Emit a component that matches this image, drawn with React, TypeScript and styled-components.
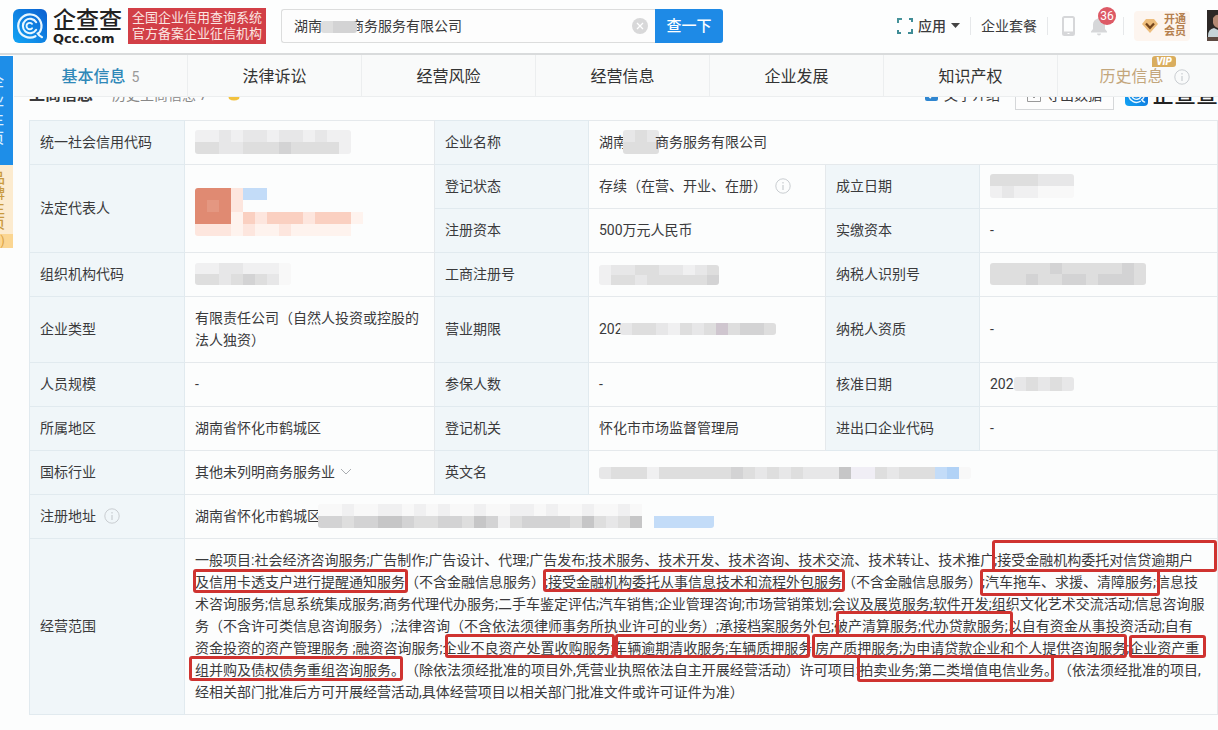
import React from 'react';
import styled, { createGlobalStyle } from 'styled-components';

const GlobalStyle = createGlobalStyle`
  * { box-sizing: border-box; }
  body {
    margin: 0;
    background: #fcfdfd;
    color: #3a3a3c;
    font: 14px/22px Roboto, "Noto Sans CJK SC", sans-serif;
    text-spacing-trim: space-all;
    overflow-x: hidden;
  }
  a { color: inherit; text-decoration: none; }
  button, input { font: inherit; color: inherit; }
`;

/* ---------- header ---------- */

const Header = styled.header`
  display: flex;
  align-items: center;
  height: 55px;
  padding: 0 0 2px 13px;
  background: #fdfefe;
  border-bottom: 2px solid #d9dbdc;
  overflow: hidden;
`;
const Brand = styled.a`
  display: flex;
  align-items: center;
  gap: 6px;
`;
const BrandText = styled.span`
  display: flex;
  flex-direction: column;
  width: 70px;
  padding-top: 3px;
  color: #222;
`;
const BrandName = styled.span<{ $size: number }>`
  font-size: ${p => p.$size}px;
  line-height: 24px;
  font-weight: 500;
  white-space: nowrap;
  color: #222;
`;
const BrandDomain = styled.span`
  font: bold 13px/12px "DejaVu Sans", sans-serif;
`;
const Slogan = styled.div`
  margin-left: 5px;
  padding: 2px 4px;
  background: #d23f47;
  color: #fbe6e2;
  font-size: 13px;
  line-height: 16px;
  white-space: nowrap;
`;
const Search = styled.form`
  position: relative;
  display: flex;
  flex: 0 0 442px;
  height: 34px;
  margin-left: 15px;
`;
const SearchInput = styled.input`
  flex: 1;
  min-width: 0;
  padding: 0 34px 0 12px;
  border: 1px solid #dcdddd;
  border-right: 0;
  border-radius: 3px 0 0 3px;
  background: #fdfdfd;
  font-size: 14px;
  outline: none;
`;
const SearchMask = styled.span`
  position: absolute;
  left: 40px;
  top: 12px;
  display: flex;
`;
const ClearButton = styled.button`
  position: absolute;
  right: 75px;
  top: 9px;
  display: flex;
  padding: 0;
  border: 0;
  background: none;
`;
const SearchButton = styled.button`
  width: 68px;
  padding: 0;
  border: 0;
  border-radius: 0 3px 3px 0;
  background: #1e8ae6;
  color: #fff;
  font-size: 15px;
  font-weight: 500;
`;
const Tools = styled.nav`
  display: flex;
  align-items: center;
  margin-left: auto;
  white-space: nowrap;
`;
const ToolLink = styled.a<{ $strong?: boolean }>`
  display: flex;
  align-items: center;
  gap: 5px;
  font-weight: ${p => (p.$strong ? 500 : 400)};
`;
const Divider = styled.span`
  width: 1px;
  height: 18px;
  margin: 0 10px;
  background: #e6e8ea;
`;
const IconGroup = styled.span`
  display: flex;
  gap: 15px;
  margin: 0 5px 0 4px;
`;
const IconButton = styled.button`
  position: relative;
  display: flex;
  padding: 0;
  border: 0;
  background: none;
`;
const Badge = styled.span`
  position: absolute;
  left: 8px;
  top: -9px;
  width: 18px;
  height: 18px;
  border-radius: 9px;
  background: #dd5a66;
  color: #fff;
  font-size: 12px;
  line-height: 18px;
  text-align: center;
`;
const Membership = styled.a`
  display: flex;
  align-items: center;
  gap: 6px;
  height: 30px;
  padding: 0 4px 0 8px;
  border-radius: 4px;
  background: #fdf5ef;
  color: #b5804e;
  font-size: 11px;
  line-height: 12px;
  font-weight: 700;
`;
const Avatar = styled.svg`
  display: block;
  margin-left: 17px;
`;

/* ---------- frame ---------- */

const Frame = styled.div`
  display: flex;
  align-items: flex-start;
`;
const Side = styled.aside`
  flex: 0 0 14px;
  padding: 1px 1px 0 0;
  overflow: hidden;
`;
const SideLink = styled.a<{ $gold?: boolean }>`
  display: flex;
  flex-direction: column;
  align-items: flex-end;
  height: ${p => (p.$gold ? 69 : 109)}px;
  padding: ${p => (p.$gold ? '6px 8px 0 0' : '16px 9px 0 0')};
  background: ${p => (p.$gold ? '#fcebcf' : '#1e8ee8')};
  color: ${p => (p.$gold ? '#c99a3f' : '#d9efff')};
  font-size: 14px;
  line-height: ${p => (p.$gold ? 15 : 19)}px;
  font-weight: 500;
`;
const SideToggle = styled.button`
  display: block;
  width: 13px;
  height: 14px;
  padding: 0 8px 0 0;
  border: 0;
  background: #fbd692;
  color: #d8a040;
  font-size: 12px;
  line-height: 14px;
`;
const Main = styled.main`
  flex: 1;
  min-width: 0;
`;
const Tabs = styled.nav`
  display: grid;
  grid-template-columns: repeat(7, 1fr);
  height: 42px;
  margin-right: -14px;
  background: #f9fafa;
  border-bottom: 1px solid #eceeef;
`;
const Tab = styled.a<{ $tone?: 'active' | 'gold' }>`
  position: relative;
  display: flex;
  align-items: center;
  justify-content: center;
  gap: 6px;
  padding-top: 2px;
  border-right: 1px solid #eceeef;
  font-size: 16px;
  font-weight: ${p => (p.$tone === 'active' ? 500 : 400)};
  color: ${p => (p.$tone === 'active' ? '#2f88b8' : p.$tone === 'gold' ? '#c3a67c' : '#333')};
`;
const TabCount = styled.span`
  font-size: 14px;
  font-weight: 400;
  color: #999;
`;
const HistoryText = styled.span`
  margin-right: 26px;
`;
const TabInfo = styled.span`
  position: absolute;
  left: 116px;
  top: 14px;
  display: flex;
`;
const VipTag = styled.span`
  position: absolute;
  left: 94px;
  top: 1px;
  width: 24px;
  border-radius: 3px 3px 3px 0;
  background: #d9ad5e;
  color: #fff;
  font-size: 10px;
  line-height: 11px;
  font-weight: 900;
  font-style: italic;
  text-align: center;
`;

/* ---------- section heading, partly scrolled under the tabs ---------- */

const HeadingClip = styled.div`
  display: flex;
  align-items: flex-end;
  height: 23px;
  padding: 0 0 10px 15px;
  overflow: hidden;
`;
const Heading = styled.div`
  display: flex;
  align-items: center;
  flex: 1;
  height: 31px;
  white-space: nowrap;
`;
const Title = styled.h2`
  margin: 0;
  font-size: 16px;
  font-weight: 700;
`;
const HistoryLink = styled.a`
  margin: 0 20px 0 19px;
  color: #888;
`;
const CheckLabel = styled.label`
  display: flex;
  align-items: center;
  gap: 6px;
  margin-left: auto;
`;
const Check = styled.input`
  width: 13px;
  height: 13px;
  margin: 0;
  accent-color: #2f86d0;
`;
const ExportButton = styled.button`
  display: flex;
  align-items: center;
  gap: 5px;
  height: 31px;
  margin: 0 11px 0 15px;
  padding: 0 11px;
  border: 1px solid #d5d7d9;
  background: #fdfdfd;
`;
const Watermark = styled.span`
  display: flex;
  align-items: center;
  gap: 4px;
`;

/* ---------- company table ---------- */

const TableWrap = styled.section`
  padding: 0 0 16px 15px;
`;
const Table = styled.table`
  width: 100%;
  table-layout: fixed;
  border-collapse: collapse;
`;
const Label = styled.th`
  height: 44px;
  padding: 0 10px 2px;
  border: 1px solid #e1eaef;
  background: #f0f6f9;
  font-weight: 400;
  text-align: left;
`;
const Cell = styled.td<{ $tall?: boolean; $low?: boolean }>`
  height: ${p => (p.$tall ? 66 : 44)}px;
  padding: ${p => (p.$low ? '6px 10px 0' : '0 10px 2px')};
  border: 1px solid #e5e9ec;
`;
const Line = styled.div`
  display: flex;
  align-items: center;
  white-space: nowrap;
`;
const After = styled.span`
  display: flex;
  margin-left: 8px;
`;
const Scope = styled.td`
  position: relative;
  height: 176px;
  padding: 9px 10px 11px;
  border: 1px solid #e5e9ec;
`;
const ScopeLine = styled.span`
  display: block;
  white-space: pre;
`;
const MarkBox = styled.span<{ $x: number; $y: number; $w: number; $h: number }>`
  position: absolute;
  left: ${p => p.$x}px;
  top: ${p => p.$y}px;
  width: ${p => p.$w}px;
  height: ${p => p.$h}px;
  border: 3px solid #cf3330;
  border-radius: 3px;
  pointer-events: none;
`;

/* ---------- redaction mosaic ---------- */

const tones: Record<string, string> = {
  a: '#f8f8f8', b: '#f0f0f1', c: '#e7e7e8', d: '#dedede', e: '#d3d3d4', f: '#c6c6c7',
  l: '#f0eef5', m: '#cfc6cf', B: '#c3dcf8', D: '#b1d2f6',
  R: '#e08a72', S: '#e49781', O: '#fad0c1', P: '#fde6de', Q: '#fef3ee',
};
const MosaicGrid = styled.span<{ $over?: number }>`
  display: inline-flex;
  flex-direction: column;
  flex: none;
  vertical-align: middle;
  margin: 0 -${p => p.$over ?? 0}px;
  border-radius: 3px;
  overflow: hidden;
`;
const MosaicRow = styled.span`
  display: flex;
`;
const Tile = styled.span<{ $c: string; $h: number }>`
  width: 12px;
  height: ${p => p.$h}px;
  background: ${p => tones[p.$c] ?? 'transparent'};
`;
function Mosaic({ rows, over, tile = 12 }: { rows: string[]; over?: number; tile?: number }) {
  return (
    <MosaicGrid $over={over} aria-hidden="true">
      {rows.map((r, i) => (
        <MosaicRow key={i}>
          {r.split('').map((c, j) => <Tile key={j} $c={c} $h={tile} />)}
        </MosaicRow>
      ))}
    </MosaicGrid>
  );
}

/* ---------- icons ---------- */

function Logo({ size, id }: { size: number; id: string }) {
  return (
    <svg width={size} height={size} viewBox="0 0 34 34" aria-hidden="true">
      <defs>
        <linearGradient id={id} x1="1" y1="0" x2="0" y2="1">
          <stop offset="0" stopColor="#0b5fd0" />
          <stop offset="1" stopColor="#13a5f5" />
        </linearGradient>
      </defs>
      <rect width="34" height="34" rx="6" fill={`url(#${id})`} />
      <g fill="none" stroke="#e8f7ff" strokeLinecap="round">
        <path d="M22.5 27.2 A11.6 11.6 0 1 1 27.6 21.5 Q26.6 24 24.8 24.6 Q26 27 29 28.2" strokeWidth="2.2" />
        <path d="M23.2 20.8 A7.2 7.2 0 1 1 23.2 13.2" strokeWidth="2.1" />
        <path d="M19 19.3 A3.2 3.2 0 1 1 19 14.8" strokeWidth="1.9" />
      </g>
    </svg>
  );
}
function InfoIcon() {
  return (
    <svg width="16" height="16" viewBox="0 0 16 16" fill="none" stroke="#c9cdd1" aria-hidden="true">
      <circle cx="8" cy="8" r="7.2" />
      <path d="M8 7v5M8 4v1.4" strokeWidth="1.2" />
    </svg>
  );
}

/* ---------- data ---------- */

const scopeLines = [
  '一般项目:社会经济咨询服务;广告制作;广告设计、代理;广告发布;技术服务、技术开发、技术咨询、技术交流、技术转让、技术推广;接受金融机构委托对信贷逾期户',
  '及信用卡透支户进行提醒通知服务（不含金融信息服务）;接受金融机构委托从事信息技术和流程外包服务（不含金融信息服务）;汽车拖车、求援、清障服务;信息技',
  '术咨询服务;信息系统集成服务;商务代理代办服务;二手车鉴定评估;汽车销售;企业管理咨询;市场营销策划;会议及展览服务;软件开发;组织文化艺术交流活动;信息咨询服',
  '务（不含许可类信息咨询服务）;法律咨询（不含依法须律师事务所执业许可的业务）;承接档案服务外包;破产清算服务;代办贷款服务;以自有资金从事投资活动;自有',
  '资金投资的资产管理服务 ;融资咨询服务;企业不良资产处置收购服务;车辆逾期清收服务;车辆质押服务;房产质押服务;为申请贷款企业和个人提供咨询服务;企业资产重',
  '组并购及债权债务重组咨询服务。（除依法须经批准的项目外,凭营业执照依法自主开展经营活动）许可项目:拍卖业务;第二类增值电信业务。（依法须经批准的项目,',
  '经相关部门批准后方可开展经营活动,具体经营项目以相关部门批准文件或许可证件为准）',
];

/* hand-drawn marks over the scope text: x, y, width, height inside the cell */
const marks = [
  [807, 1, 225, 32],
  [8, 30, 215, 24],
  [358, 30, 302, 23],
  [795, 30, 180, 27],
  [651, 72, 177, 26],
  [260, 95, 170, 24],
  [430, 95, 195, 24],
  [627, 95, 315, 24],
  [944, 96, 77, 23],
  [4, 117, 214, 25],
  [672, 116, 197, 27],
];

export default function App() {
  return (
    <>
      <GlobalStyle />
      <Header>
        <Brand href="#">
          <Logo size={34} id="brand" />
          <BrandText>
            <BrandName $size={23}>企查查</BrandName>
            <BrandDomain>Qcc.com</BrandDomain>
          </BrandText>
        </Brand>
        <Slogan>
          全国企业信用查询系统<br />官方备案企业征信机构
        </Slogan>
        <Search onSubmit={e => e.preventDefault()}>
          <SearchInput aria-label="搜索企业" defaultValue="湖南　　商务服务有限公司" />
          <SearchMask><Mosaic rows={['dee']} /></SearchMask>
          <ClearButton type="button" aria-label="清除">
            <svg width="16" height="16" viewBox="0 0 16 16" aria-hidden="true">
              <circle cx="8" cy="8" r="8" fill="#d8d8d9" />
              <path d="M5 5l6 6M11 5l-6 6" stroke="#fff" strokeWidth="1.3" />
            </svg>
          </ClearButton>
          <SearchButton type="submit">查一下</SearchButton>
        </Search>
        <Tools>
          <ToolLink href="#" $strong>
            <svg width="16" height="16" viewBox="0 0 16 16" fill="none" strokeWidth="2" aria-hidden="true">
              <path d="M1 5V1h4" stroke="#46939a" />
              <path d="M12 1h3v3M1 12v3h3M15 11v4h-4" stroke="#3f8c96" />
            </svg>
            应用
            <svg width="9" height="5" viewBox="0 0 9 5" aria-hidden="true"><path d="M0 0h9L4.500 5z" fill="#444" /></svg>
          </ToolLink>
          <Divider />
          <ToolLink href="#">企业套餐</ToolLink>
          <Divider />
          <IconGroup>
            <IconButton aria-label="手机版">
              <svg width="13" height="20" viewBox="0 0 13 20" fill="none" aria-hidden="true">
                <rect x="1" y="1" width="11" height="18" rx="1.500" stroke="#d6d7d9" strokeWidth="2" />
                <path d="M1 17h11" stroke="#d6d7d9" strokeWidth="3" />
                <path d="M5.500 17.500h2" stroke="#fff" />
              </svg>
            </IconButton>
            <IconButton aria-label="消息">
              <svg width="18" height="20" viewBox="0 0 18 20" fill="#d6d7d9" aria-hidden="true">
                <path d="M9 1.500c.8 0 1.300.5 1.300 1.300C13.200 3.400 15 5.800 15 8.600V13l2 2.500v.9H1v-.9L3 13V8.600c0-2.800 1.800-5.200 4.700-5.800C7.700 2 8.200 1.500 9 1.500zM7 17.500h4a2 2 0 0 1-4 0z" />
              </svg>
              <Badge>36</Badge>
            </IconButton>
          </IconGroup>
          <Divider />
          <Membership href="#">
            <svg width="16" height="14" viewBox="0 0 16 14" aria-hidden="true">
              <path d="M4 0h8l4 5-8 9-8-9z" fill="#edbd7c" />
              <path d="M4 4.500l4 4.300 4-4.300" fill="none" stroke="#73441c" strokeWidth="2.200" />
            </svg>
            <span>开通<br />会员</span>
          </Membership>
          <Avatar width="11" height="31" viewBox="0 0 11 31" aria-hidden="true">
            <rect width="11" height="31" fill="#2c2826" />
            <path d="M6 8q3-4 5-3v13q-4-1-5-5z" fill="#b58a74" />
            <path d="M1 26q0-7 6-8l4 2v7H1z" fill="#c5d3d8" />
            <path d="M0 27h11v4H0z" fill="#5c4a42" />
          </Avatar>
        </Tools>
      </Header>

      <Frame>
        <Side>
          <SideLink href="#"><span>企</span><span>业</span><span>主</span><span>页</span></SideLink>
          <SideLink href="#" $gold><span>品</span><span>牌</span><span>主</span><span>页</span></SideLink>
          <SideToggle aria-label="收起">)</SideToggle>
        </Side>
        <Main>
          <Tabs>
            <Tab href="#" $tone="active">基本信息<TabCount>5</TabCount></Tab>
            <Tab href="#">法律诉讼</Tab>
            <Tab href="#">经营风险</Tab>
            <Tab href="#">经营信息</Tab>
            <Tab href="#">企业发展</Tab>
            <Tab href="#">知识产权</Tab>
            <Tab href="#" $tone="gold">
              <HistoryText>历史信息</HistoryText>
              <VipTag>VIP</VipTag>
              <TabInfo><InfoIcon /></TabInfo>
            </Tab>
          </Tabs>

          <HeadingClip>
            <Heading>
              <Title>工商信息</Title>
              <HistoryLink href="#">历史工商信息 7</HistoryLink>
              <svg width="14" height="12" viewBox="0 0 14 12" aria-hidden="true">
                <path d="M0 2l4 3 3-5 3 5 4-3-2 8q-5 3-10 0z" fill="#f2c23e" />
              </svg>
              <CheckLabel><Check type="checkbox" defaultChecked />文字介绍</CheckLabel>
              <ExportButton type="button">
                <svg width="14" height="14" viewBox="0 0 14 14" fill="none" stroke="#999" aria-hidden="true">
                  <path d="M.5.5h13v13H.5zM7 3v7M4.500 7.500L7 10l2.500-2.500" />
                </svg>
                导出数据
              </ExportButton>
              <Watermark><Logo size={23} id="mark" /><BrandName $size={22}>企查查</BrandName></Watermark>
            </Heading>
          </HeadingClip>

          <TableWrap>
            <Table>
              <colgroup>
                <col width="155" /><col width="250" /><col width="154" />
                <col width="237" /><col width="154" /><col />
              </colgroup>
              <tbody>
                <tr>
                  <Label scope="row">统一社会信用代码</Label>
                  <Cell><Mosaic rows={['bbcbccbccbcbb', 'ddccdddeddddb']} /></Cell>
                  <Label scope="row">企业名称</Label>
                  <Cell colSpan={3}><Line>湖南<Mosaic over={4} rows={['cdc', 'ddd']} />商务服务有限公司</Line></Cell>
                </tr>
                <tr>
                  <Label scope="row" rowSpan={2}>法定代表人</Label>
                  <Cell rowSpan={2} $low>
                    <Mosaic rows={['RRRPBB', 'RSRP', 'RRRQOPOOOPOOOQ', 'PPPQPQQPQQQQQ']} />
                  </Cell>
                  <Label scope="row">登记状态</Label>
                  <Cell><Line>存续（在营、开业、在册）<After><InfoIcon /></After></Line></Cell>
                  <Label scope="row">成立日期</Label>
                  <Cell><Mosaic rows={['ddddccc', 'bcbbaaa']} /></Cell>
                </tr>
                <tr>
                  <Label scope="row">注册资本</Label>
                  <Cell>500万元人民币</Cell>
                  <Label scope="row">实缴资本</Label>
                  <Cell>-</Cell>
                </tr>
                <tr>
                  <Label scope="row">组织机构代码</Label>
                  <Cell><Mosaic rows={['bbccbbba', 'ddcdedca']} tile={11} /></Cell>
                  <Label scope="row">工商注册号</Label>
                  <Cell><Mosaic rows={['bccddccbcd', 'bddcddddde']} tile={10} /></Cell>
                  <Label scope="row">纳税人识别号</Label>
                  <Cell><Mosaic rows={['dddddeddddded', 'dddeddeedeeed']} tile={11} /></Cell>
                </tr>
                <tr>
                  <Label scope="row">企业类型</Label>
                  <Cell $tall>有限责任公司（自然人投资或控股的法人独资）</Cell>
                  <Label scope="row">营业期限</Label>
                  <Cell><Line>202<Mosaic rows={['cddcbdcdmdeed']} over={3} /></Line></Cell>
                  <Label scope="row">纳税人资质</Label>
                  <Cell>-</Cell>
                </tr>
                <tr>
                  <Label scope="row">人员规模</Label>
                  <Cell>-</Cell>
                  <Label scope="row">参保人数</Label>
                  <Cell>-</Cell>
                  <Label scope="row">核准日期</Label>
                  <Cell><Line>202<Mosaic rows={['cdcdc']} tile={14} /></Line></Cell>
                </tr>
                <tr>
                  <Label scope="row">所属地区</Label>
                  <Cell>湖南省怀化市鹤城区</Cell>
                  <Label scope="row">登记机关</Label>
                  <Cell>怀化市市场监督管理局</Cell>
                  <Label scope="row">进出口企业代码</Label>
                  <Cell>-</Cell>
                </tr>
                <tr>
                  <Label scope="row">国标行业</Label>
                  <Cell>
                    <Line>
                      其他未列明商务服务业
                      <svg width="20" height="8" viewBox="0 0 20 8" fill="none" stroke="#a9adb1" aria-hidden="true">
                        <path d="M6 1l5 5 5-5" />
                      </svg>
                    </Line>
                  </Cell>
                  <Label scope="row">英文名</Label>
                  <Cell colSpan={3}><Mosaic rows={['cdddbdddddde' + 'dcdcdcccf' + 'lldcdddBDa']} /></Cell>
                </tr>
                <tr>
                  <Label scope="row"><Line>注册地址<After><InfoIcon /></After></Line></Label>
                  <Cell colSpan={5}>
                    <Line>
                      湖南省怀化市鹤城区
                      <Mosaic over={3} rows={['aabaabbababaabaabbabaabaaba', 'eedeeffeddeedfebdeeeedfdcdf BBBBB']} />
                    </Line>
                  </Cell>
                </tr>
                <tr>
                  <Label scope="row">经营范围</Label>
                  <Scope colSpan={5}>
                    {scopeLines.map(t => <ScopeLine key={t}>{t}</ScopeLine>)}
                    {marks.map(([x, y, w, h]) => <MarkBox key={`${x}-${y}`} $x={x} $y={y} $w={w} $h={h} />)}
                  </Scope>
                </tr>
              </tbody>
            </Table>
          </TableWrap>
        </Main>
      </Frame>
    </>
  );
}
